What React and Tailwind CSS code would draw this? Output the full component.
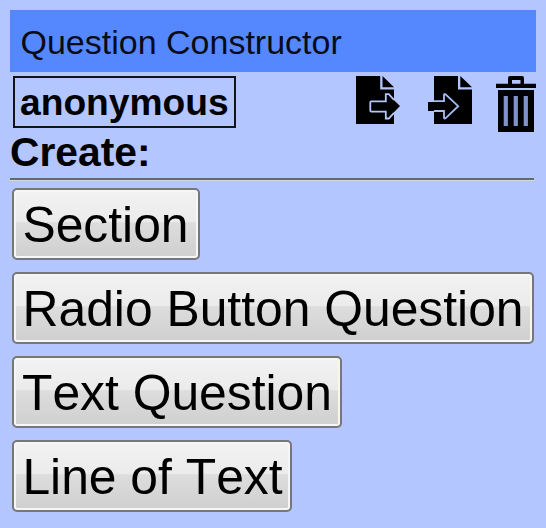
const labels = [
  { text: "Section", size: "w-[188px]", nudge: "pr-[1px]" },
  { text: "Radio Button Question", size: "w-[522px]", nudge: "pl-0" },
  { text: "Text Question", size: "w-[330px]", nudge: "pl-0" },
  { text: "Line of Text", size: "w-[280px]", nudge: "pl-[1px]" },
];

function ExportIcon() {
  return (
    <svg width="46" height="50" viewBox="0 0 46 50" aria-label="Export">
      <path d="M1 1H25.2V14.5H39V49H1Z" fill="#000" />
      <path d="M27.5 1L39 12.3H27.5Z" fill="#000" />
      <path d="M16.3 26.3H30.5V19.5H33L45 31L33 43.5H30.5V37.2H16.3Q15.3 37.2 15.3 36.2V27.3Q15.3 26.3 16.3 26.3Z" fill="#000" />
      <path d="M39 24.8L33.8 19.2H30.8V26.3H16.3Q15.3 26.3 15.3 27.3V35.6Q15.3 36.6 16.3 36.6H30.8V43.5H33.8L39 37.8" fill="none" stroke="#b3c6ff" strokeWidth="1.8" />
    </svg>
  );
}

function ImportIcon() {
  return (
    <svg width="46" height="50" viewBox="0 0 46 50" aria-label="Import">
      <path d="M7 1H31V14.5H45V49H7Z" fill="#000" />
      <path d="M33.3 1L45 12.3H33.3Z" fill="#000" />
      <path d="M1 27H17V20L31 31.5L17 43V36H1Z" fill="#000" />
      <path d="M7 26.2H17V20Q17 18.7 18.5 19.3L31.2 31.2L18.5 43.3Q17 44 17 42.5V36H7" fill="none" stroke="#a9bcf4" strokeWidth="1.8" />
    </svg>
  );
}

function TrashIcon() {
  return (
    <svg width="42" height="57" viewBox="0 0 42 57" aria-label="Delete">
      <path d="M1 8.7H13V3Q13 1 15 1H27Q29 1 29 3V8.7H41V13H1ZM17 5V8.7H25.5V5Z" fill="#000" fillRule="evenodd" />
      <path d="M3 15H39V57H3Z" fill="#000" />
      <path d="M10.8 21V51M20.8 21V51M30.8 21V51" stroke="#8092ca" strokeWidth="4.2" />
    </svg>
  );
}

export default function App() {
  return (
    <main className="h-[528px] w-[546px] overflow-hidden bg-[#b3c6ff] px-[10px] pt-[10px] font-['Liberation_Sans',Arial,sans-serif] text-black [font-kerning:none]">
      <header className="flex h-[62px] items-center bg-[#5588ff] pl-[10.5px] pt-[2px] text-[34px] leading-none text-[#080c16]">
        <h1 className="whitespace-nowrap">Question Constructor</h1>
      </header>

      <div className="flex h-[62px] items-start justify-between pl-[3px] pt-[3px]">
        <div className="mt-[1px] flex h-[52px] w-[223px] items-center border-2 border-[#111318] pl-[5px] pt-[2px] text-[37.2px] font-bold leading-none">
          <span className="whitespace-nowrap">anonymous</span>
        </div>
        <div className="-mr-[1px] flex items-start">
          <ExportIcon />
          <div className="ml-[26px]"><ImportIcon /></div>
          <div className="ml-[22px]"><TrashIcon /></div>
        </div>
      </div>

      <h2 className="h-[44px] text-[40.8px] font-bold leading-[36px]">Create:</h2>
      <hr className="w-[524px] border-0 border-t-2 border-[#646775] shadow-[0_1px_0_#d5d8df]" />

      <div className="ml-[2px] mt-[8px] flex flex-col items-start gap-[12px]">
        {labels.map(({ text, size, nudge }) => (
          <button
            key={text}
            className={`${size} ${nudge} flex h-[72px] items-center justify-center whitespace-nowrap rounded-[5px] border-2 border-[#777779] bg-[linear-gradient(#f2f2f2_0%,#ebebeb_47%,#dddddd_48%,#cfcfcf_100%)] pt-[4px] text-[49.8px] leading-none shadow-[inset_0_0_0_2px_#f6f6f6]`}
          >
            {text}
          </button>
        ))}
      </div>
    </main>
  );
}
